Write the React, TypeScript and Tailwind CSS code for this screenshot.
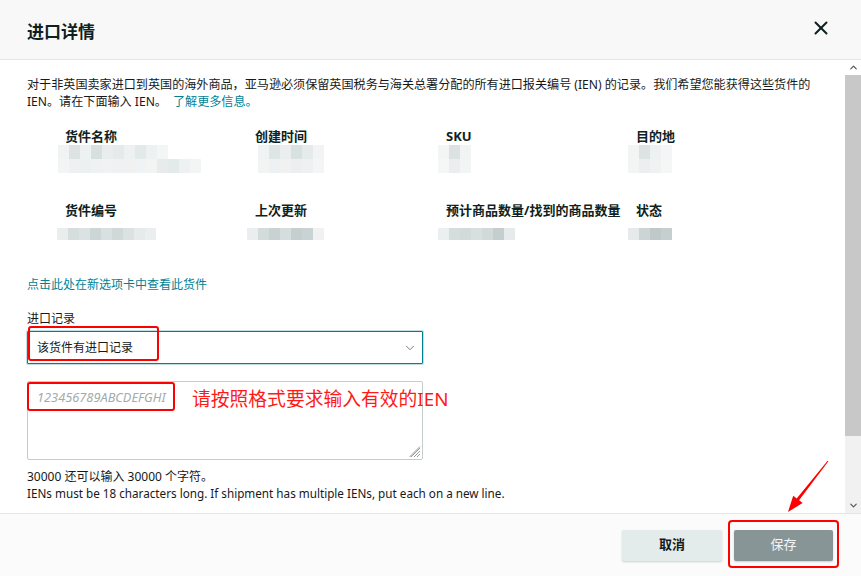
import React from 'react';
import { X, ChevronDown, ChevronUp } from 'lucide-react';

type MosaicRows = string[][];

const Mosaic: React.FC<{ rows: MosaicRows; h: string; className?: string }> = ({ rows, h, className }) => (
  <div className={`flex flex-col ${className || ''}`}>
    {rows.map((row, i) => (
      <div key={i} className="flex">
        {row.map((c, j) => (
          <div key={j} className={`w-[11px] ${h} ${c}`} />
        ))}
      </div>
    ))}
  </div>
);

// blurred values from the screenshot (pixelated in the original)
const ROW1: { label: string; rows: MosaicRows; offset: string }[] = [
  {
    label: '货件名称',
    offset: '-ml-[7px]',
    rows: [
      ['bg-[#f1f3f3]', 'bg-[#dde3e3]', 'bg-[#eef1f1]', 'bg-[#d8dfdf]', 'bg-[#e9eded]', 'bg-[#e6eaea]', 'bg-[#eef1f1]', 'bg-[#e3e8e8]', 'bg-[#eef1f1]', 'bg-[#f4f6f6]'],
      ['bg-[#f3f5f5]', 'bg-[#eef1f1]', 'bg-[#edf0f0]', 'bg-[#eff2f2]', 'bg-[#f1f3f3]', 'bg-[#eff2f2]', 'bg-[#f0f2f2]', 'bg-[#f0f3f3]', 'bg-[#f2f4f4]', 'bg-[#e7ebeb]', 'bg-[#e4e9e9]', 'bg-[#eef1f1]', 'bg-[#f3f5f5]'],
    ],
  },
  {
    label: '创建时间',
    offset: 'ml-[3px]',
    rows: [
      ['bg-[#f0f3f3]', 'bg-[#dfe5e5]', 'bg-[#eaeeee]', 'bg-[#d9e0e0]', 'bg-[#e5eaea]', 'bg-[#f2f4f4]'],
      ['bg-[#f2f4f4]', 'bg-[#eef1f1]', 'bg-[#f0f2f2]', 'bg-[#eceff0]', 'bg-[#eef1f1]', 'bg-[#f4f6f6]'],
    ],
  },
  {
    label: 'SKU',
    offset: '-ml-[8px]',
    rows: [
      ['bg-[#f3f5f5]', 'bg-[#dce2e2]', 'bg-[#f2f4f4]'],
      ['bg-[#f5f7f7]', 'bg-[#eaeeee]', 'bg-[#f3f5f5]'],
    ],
  },
  {
    label: '目的地',
    offset: '-ml-[8px]',
    rows: [
      ['bg-[#f3f5f5]', 'bg-[#dde3e3]', 'bg-[#eef1f1]', 'bg-[#f4f6f6]'],
      ['bg-[#f3f5f5]', 'bg-[#eceff0]', 'bg-[#f0f2f2]', 'bg-[#f5f7f7]'],
    ],
  },
];

const ROW2: { label: string; rows: MosaicRows }[] = [
  { label: '货件编号', rows: [['bg-[#e9eded]', 'bg-[#d6dddd]', 'bg-[#dce2e2]', 'bg-[#cdd6d6]', 'bg-[#d9e0e0]', 'bg-[#d0d8d8]', 'bg-[#dce2e2]', 'bg-[#e6eaea]', 'bg-[#eaeeee]']] },
  { label: '上次更新', rows: [['bg-[#eaeeee]', 'bg-[#d4dbdb]', 'bg-[#c9d2d2]', 'bg-[#d6dddd]', 'bg-[#c6cfcf]', 'bg-[#cad3d3]', 'bg-[#f0f2f2]']] },
  { label: '预计商品数量/找到的商品数量', rows: [['bg-[#eceff0]', 'bg-[#d6dddd]', 'bg-[#d3dada]', 'bg-[#d8dfdf]', 'bg-[#d1d9d9]', 'bg-[#c5cece]', 'bg-[#e6eaea]']] },
  { label: '状态', rows: [['bg-[#e6eaea]', 'bg-[#ccd4d4]', 'bg-[#bfc9c9]', 'bg-[#c6cfcf]']] },
];

export default function App() {
  return (
    <div className="relative w-[861px] h-[576px] overflow-hidden flex flex-col bg-white text-[#0f1111] font-['Noto_Sans','Noto_Sans_CJK_SC',sans-serif]">
      {/* header */}
      <div className="h-[60px] shrink-0 flex items-center justify-between pl-[27px] pr-[29px] bg-[#f8f8f8] border-b border-[#e4e6e6]">
        <h2 className="text-[17px] font-bold text-[#0f1f22] mt-[5px]">进口详情</h2>
        <button className="text-[#0f1f22] -mt-[4px]">
          <X size={22} strokeWidth={2.2} />
        </button>
      </div>

      {/* body */}
      <div className="flex-1 flex min-h-0">
        <div className="flex-1 pl-[27px] pr-[27px] pt-[16px] overflow-hidden">
          <div className="text-[12.1px] leading-[17px] text-[#16191a]">
            <div className="whitespace-nowrap">对于非英国卖家进口到英国的海外商品，亚马逊必须保留英国税务与海关总署分配的所有进口报关编号 (IEN) 的记录。我们希望您能获得这些货件的</div>
            <div className="flex">
              <span>IEN。请在下面输入 IEN。</span>
              <a className="text-[#008296] ml-[6px]">了解更多信息。</a>
            </div>
          </div>

          <div className="ml-[38px] mt-[17px] grid grid-cols-[190px_191px_190px_190px]">
            {ROW1.map(c => (
              <div key={c.label} className="flex flex-col">
                <span className="text-[13px] leading-[18px] font-bold text-[#0f1f22]">{c.label}</span>
                <Mosaic rows={c.rows} h="h-[14px]" className={c.offset} />
              </div>
            ))}
          </div>

          <div className="ml-[38px] mt-[28px] grid grid-cols-[190px_191px_190px_190px]">
            {ROW2.map(c => (
              <div key={c.label} className="flex flex-col">
                <span className="text-[13px] leading-[18px] font-bold text-[#0f1f22] whitespace-nowrap">{c.label}</span>
                <Mosaic rows={c.rows} h="h-[12px]" className="-ml-[8px] mt-[9px]" />
              </div>
            ))}
          </div>

          <a className="block mt-[36px] text-[12px] leading-[17px] text-[#008296]">点击此处在新选项卡中查看此货件</a>

          <div className="mt-[17px] text-[12px] leading-[17px] text-[#16191a]">进口记录</div>

          <div className="relative mt-[4px] w-[396px]">
            <div className="h-[33px] flex items-center justify-between pl-[9px] pr-[5px] border border-[#00808f] shadow-[0_0_0_1px_rgba(0,128,143,0.25)] rounded-[1px] bg-white">
              <span className="text-[12px] text-[#16191a]">该货件有进口记录</span>
              <ChevronDown size={14} strokeWidth={1.6} className="text-[#6b7575]" />
            </div>
            <div className="absolute left-[1px] -top-[5px] w-[131px] h-[35px] border-2 border-[#ff0000] rounded-[3px]" />
          </div>

          <div className="relative mt-[17px] w-[396px]">
            <textarea
              className="block w-full h-[79px] resize-none border border-[#c6cccc] rounded-[2px] pl-[9px] pt-[7px] text-[12.8px] leading-[16px] outline-none placeholder:italic placeholder:text-[#a3abab]"
              placeholder="123456789ABCDEFGHI"
            />
            <svg className="absolute right-[2px] bottom-[2px]" width="12" height="12" viewBox="0 0 12 12">
              <path d="M11 2 L2 11 M11 5 L5 11 M11 8 L8 11 M11 0.5 L0.5 11" stroke="#8a9090" strokeWidth="0.9" />
            </svg>
            <div className="absolute left-0 top-[1px] w-[148px] h-[29px] border-2 border-[#ff0000] rounded-[3px]" />
            <span className="absolute left-[165px] top-[5px] whitespace-nowrap text-[18.8px] leading-[26px] text-[#ff1a1a]">请按照格式要求输入有效的IEN</span>
          </div>

          <div className="mt-[9px] text-[12px] leading-[16px] text-[#16191a]">
            <div>30000 还可以输入 30000 个字符。</div>
            <div className="text-[11.7px]">IENs must be 18 characters long. If shipment has multiple IENs, put each on a new line.</div>
          </div>
        </div>

        {/* scrollbar */}
        <div className="w-[16px] shrink-0 flex flex-col bg-[#f1f1f1]">
          <div className="h-[15px] flex items-center justify-center bg-white text-[#505050]">
            <ChevronUp size={11} strokeWidth={2.4} />
          </div>
          <div className="h-[361px] bg-[#c8c8c8]" />
          <div className="flex-1" />
          <div className="h-[16px] flex items-center justify-center text-[#505050]">
            <ChevronDown size={11} strokeWidth={2.4} />
          </div>
        </div>
      </div>

      {/* footer */}
      <div className="h-[63px] shrink-0 flex items-center justify-end gap-[12px] pr-[28px] bg-[#fbfbfb] border-t border-[#e4e6e6]">
        <button className="w-[100px] h-[31px] bg-[#e3ebeb] rounded-[2px] shadow-[0_1px_2px_rgba(0,0,0,0.18)] text-[13px] font-bold text-[#16191a]">取消</button>
        <div className="relative">
          <button className="w-[99px] h-[31px] bg-[#879596] rounded-[2px] shadow-[0_1px_2px_rgba(0,0,0,0.18)] text-[13px] text-[#f4f6f6]">保存</button>
          <div className="absolute -left-[6px] -top-[10px] w-[111px] h-[48px] border-2 border-[#ff0000] rounded-[4px]" />
        </div>
      </div>

      {/* annotation arrow */}
      <svg className="absolute left-[780px] top-[455px]" width="52" height="62" viewBox="0 0 52 62">
        <polygon points="8,57 22.6,48.1 19.1,45.3 48.4,6.3 47.6,5.7 16.7,43.5 13.2,40.7" fill="#ff0000" />
      </svg>
    </div>
  );
}
